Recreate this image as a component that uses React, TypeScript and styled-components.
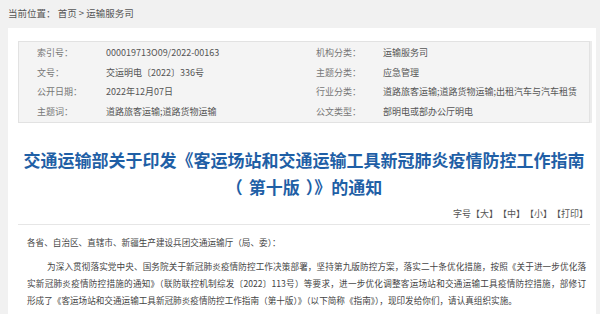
import React from "react";
import styled, { createGlobalStyle } from "styled-components";

const GlobalStyle = createGlobalStyle`
  html, body {
    margin: 0;
    padding: 0;
    background: #f1f1f1;
    font-family: "Noto Sans CJK SC", "Noto Sans", sans-serif;
  }
`;

const Crumb = styled.div`
  height: 28px;
  line-height: 26px;
  padding-left: 8px;
  font-size: 9.5px;
  color: #555;
`;

const Panel = styled.div`
  margin: 0 4px 0 8px;
  background: #fff;
  padding: 13px 6px 20px 10px;
`;

const InfoBox = styled.div`
  display: grid;
  grid-template-columns: 69px 210px 67px 1fr;
  grid-auto-rows: 19.5px;
  align-items: center;
  padding: 1px 0 1px 18px;
  background: #f4f4f4;
  border: 1px solid #e2e2e2;
  box-shadow: 2px 0 0 #ececec;
  font-size: 9px;
`;

const Label = styled.span`
  color: #777;
`;

const Value = styled.span`
  color: #555;
  white-space: nowrap;
`;

const Title = styled.h1`
  margin: 23px 0 0;
  text-align: center;
  font-size: 17px;
  line-height: 27px;
  font-weight: 700;
  color: #1f5fa6;
  font-feature-settings: "chws" 0, "halt" 0;
`;

const Paren = styled.span`
  padding: 0 6px;
`;

const Tools = styled.div`
  display: flex;
  justify-content: flex-end;
  margin-top: 7px;
  padding: 0 2px 3px 0;
  border-bottom: 1px solid #e6e6e6;
  font-size: 9px;
  line-height: 14px;
  color: #555;
`;

const Body = styled.div`
  padding: 9px 4px 0 9px;
  font-size: 8.6px;
  line-height: 17px;
  color: #444;
`;

const Para = styled.div`
  margin-top: 7px;
`;

const Line = styled.div<{ $indent?: boolean; $full?: boolean }>`
  white-space: nowrap;
  padding-left: ${(p) => (p.$indent ? "20px" : "0")};
  text-align: ${(p) => (p.$full ? "justify" : "left")};
  text-align-last: ${(p) => (p.$full ? "justify" : "left")};
`;

const info: [string, string, string, string][] = [
  ["索引号：", "000019713O09/2022-00163", "机构分类：", "运输服务司"],
  ["文号：", "交运明电〔2022〕336号", "主题分类：", "应急管理"],
  ["公开日期：", "2022年12月07日", "行业分类：", "道路旅客运输;道路货物运输;出租汽车与汽车租赁"],
  ["主题词：", "道路旅客运输;道路货物运输", "公文类型：", "部明电或部办公厅明电"],
];

export default function App() {
  return (
    <>
      <GlobalStyle />
      <Crumb>当前位置： 首页 &gt; 运输服务司</Crumb>
      <Panel>
        <InfoBox>
          {info.map((r) => (
            <React.Fragment key={r[0]}>
              <Label>{r[0]}</Label>
              <Value>{r[1]}</Value>
              <Label>{r[2]}</Label>
              <Value>{r[3]}</Value>
            </React.Fragment>
          ))}
        </InfoBox>
        <Title>
          交通运输部关于印发《客运场站和交通运输工具新冠肺炎疫情防控工作指南
          <br />
          （<Paren>第十版</Paren>）》的通知
        </Title>
        <Tools>
          <span>字号</span>
          <span>【大】</span>
          <span>【中】</span>
          <span>【小】</span>
          <span>【打印】</span>
        </Tools>
        <Body>
          <Line>各省、自治区、直辖市、新疆生产建设兵团交通运输厅（局、委）：</Line>
          <Para>
            <Line $indent $full>
              为深入贯彻落实党中央、国务院关于新冠肺炎疫情防控工作决策部署，坚持第九版防控方案，落实二十条优化措施，按照《关于进一步优化落
            </Line>
            <Line $full>
              实新冠肺炎疫情防控措施的通知》（联防联控机制综发〔2022〕113号）等要求，进一步优化调整客运场站和交通运输工具疫情防控措施，部修订
            </Line>
            <Line>
              形成了《客运场站和交通运输工具新冠肺炎疫情防控工作指南（第十版）》（以下简称《指南》），现印发给你们，请认真组织实施。
            </Line>
          </Para>
        </Body>
      </Panel>
    </>
  );
}
